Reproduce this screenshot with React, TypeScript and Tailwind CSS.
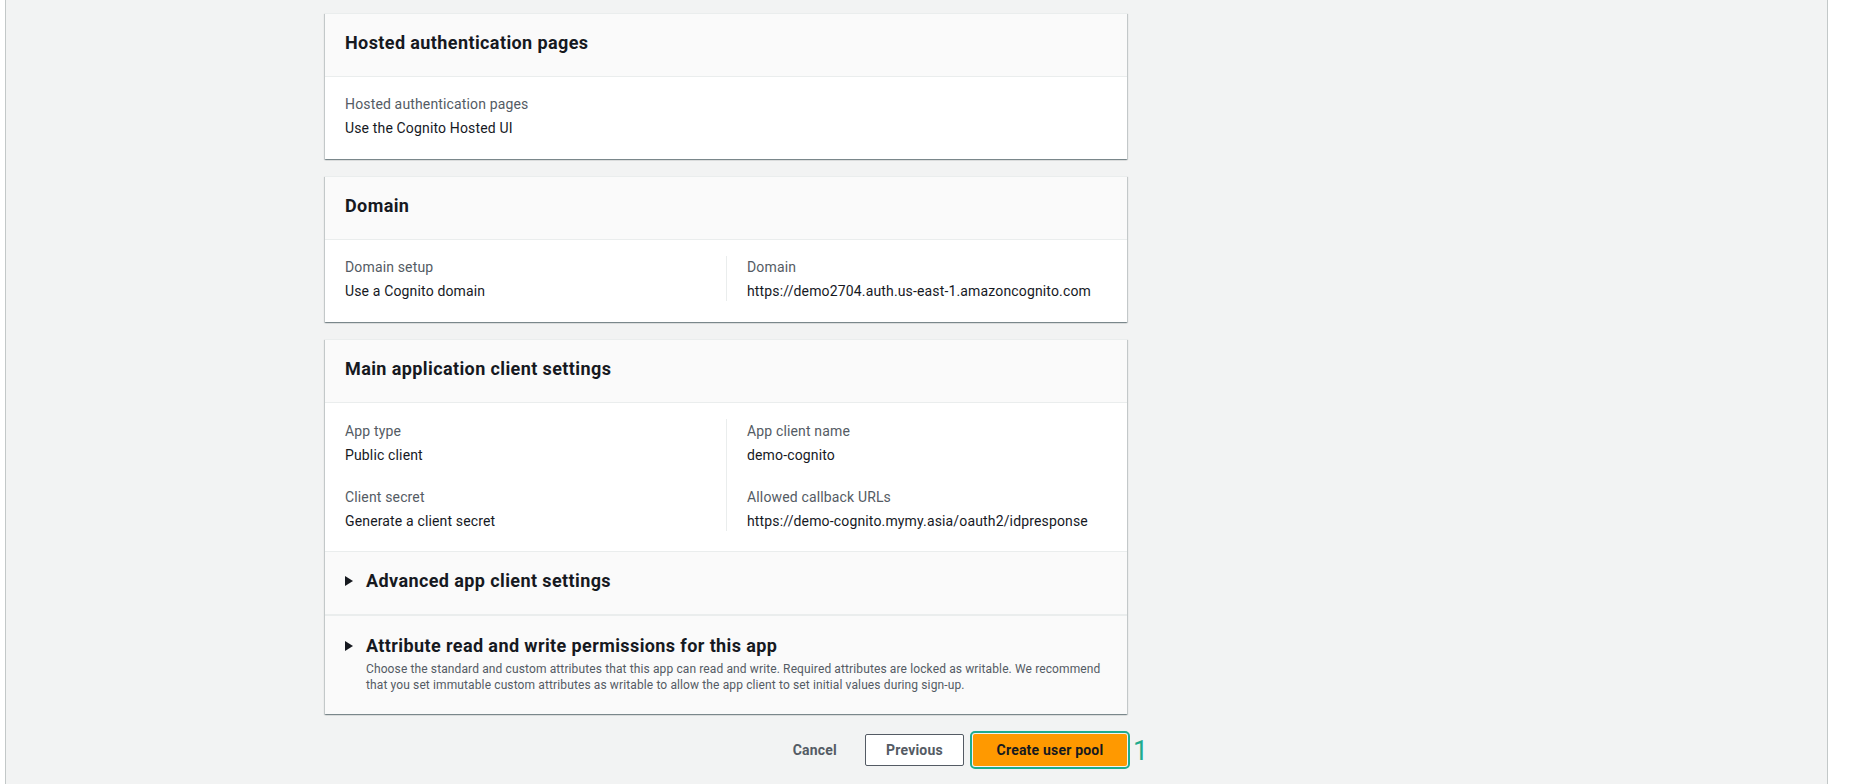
import React from "react";

const cardShadow =
  "shadow-[0_1px_1px_0_rgba(0,28,36,0.3),1px_1px_1px_0_rgba(0,28,36,0.15),-1px_1px_1px_0_rgba(0,28,36,0.15)]";

function KeyValue({ label, value }: { label: string; value: string }) {
  return (
    <div className="flex flex-col gap-1 tracking-[0.15px]">
      <div className="text-[14px] leading-[20px] text-[#545b64]">{label}</div>
      <div className="text-[14px] leading-[20px] text-[#16191f]">{value}</div>
    </div>
  );
}

function Card({ title, children }: { title: string; children: React.ReactNode }) {
  return (
    <div className={`w-[802px] bg-white border-t border-[#eaeded] ${cardShadow}`}>
      <div className="bg-[#fafafa] border-b border-[#eaeded] px-5 pt-[18px] pb-[22px]">
        <h2 className="text-[18px] leading-[22px] font-bold tracking-[0.4px] text-[#16191f]">{title}</h2>
      </div>
      {children}
    </div>
  );
}

function Caret() {
  return (
    <svg width="8" height="10" viewBox="0 0 8 10" className="shrink-0">
      <polygon points="0,0 8,5 0,10" fill="#16191f" />
    </svg>
  );
}

export default function App() {
  return (
    <div className="flex h-[784px] w-[1867px] overflow-hidden bg-white font-[Roboto,Arial,sans-serif]">
      <div className="ml-[5px] h-full w-[1823px] border-x border-[#c3c8c8] bg-[#f2f3f3] pl-[319px] pt-[13px]">
        <div className="flex w-[802px] flex-col gap-[17px]">
          <Card title="Hosted authentication pages">
            <div className="px-5 pt-[17px] pb-[21px]">
              <KeyValue label="Hosted authentication pages" value="Use the Cognito Hosted UI" />
            </div>
          </Card>

          <Card title="Domain">
            <div className="grid grid-cols-2 px-5 pt-4 pb-[21px]">
              <div className="pt-px">
                <KeyValue label="Domain setup" value="Use a Cognito domain" />
              </div>
              <div className="border-l border-[#eaeded] pl-5 pt-px">
                <KeyValue label="Domain" value="https://demo2704.auth.us-east-1.amazoncognito.com" />
              </div>
            </div>
          </Card>

          <Card title="Main application client settings">
            <div className="grid grid-cols-2 px-5 pt-4 pb-5">
              <div className="flex flex-col gap-[22px] pt-[2px]">
                <KeyValue label="App type" value="Public client" />
                <KeyValue label="Client secret" value="Generate a client secret" />
              </div>
              <div className="flex flex-col gap-[22px] border-l border-[#eaeded] pl-5 pt-[2px]">
                <KeyValue label="App client name" value="demo-cognito" />
                <KeyValue
                  label="Allowed callback URLs"
                  value="https://demo-cognito.mymy.asia/oauth2/idpresponse"
                />
              </div>
            </div>

            {/* collapsed expandable sections */}
            <div className="bg-[#fafafa] border-t border-[#eaeded] px-5 pt-[18px] pb-[22px]">
              <div className="flex items-center gap-[13px]">
                <Caret />
                <h3 className="text-[18px] leading-[22px] font-bold tracking-[0.4px] text-[#16191f]">
                  Advanced app client settings
                </h3>
              </div>
            </div>
            <div className="bg-[#fafafa] border-t-2 border-[#eaeded] px-5 pt-[19px] pb-[21px]">
              <div className="flex items-center gap-[13px]">
                <Caret />
                <h3 className="text-[18px] leading-[22px] font-bold tracking-[0.4px] text-[#16191f]">
                  Attribute read and write permissions for this app
                </h3>
              </div>
              <p className="pl-[21px] pt-1 text-[12px] leading-[16px] tracking-[0.12px] text-[#545b64]">
                Choose the standard and custom attributes that this app can read and write. Required attributes are
                locked as writable. We recommend that you set immutable custom attributes as writable to allow the app
                client to set initial values during sign-up.
              </p>
            </div>
          </Card>
        </div>

        <div className="mt-5 flex w-[802px] items-center justify-end gap-2">
          <button className="h-8 px-5 text-[14px] font-bold tracking-[0.2px] text-[#545b64]">Cancel</button>
          <button className="h-8 w-[99px] rounded-[2px] border border-[#545b64] bg-white text-[14px] font-bold tracking-[0.2px] text-[#545b64]">
            Previous
          </button>
          <div className="relative ml-[1px]">
            <button className="h-8 w-[154px] rounded-[2px] bg-[#ff9900] text-[14px] font-bold tracking-[0.2px] text-[#16191f] outline-2 outline-offset-[1px] outline-[#1fab8e]">
              Create user pool
            </button>
            <span className="absolute left-[160px] top-[2px] text-[27px] leading-[30px] text-[#1fab8e]">1</span>
          </div>
        </div>
      </div>
    </div>
  );
}
